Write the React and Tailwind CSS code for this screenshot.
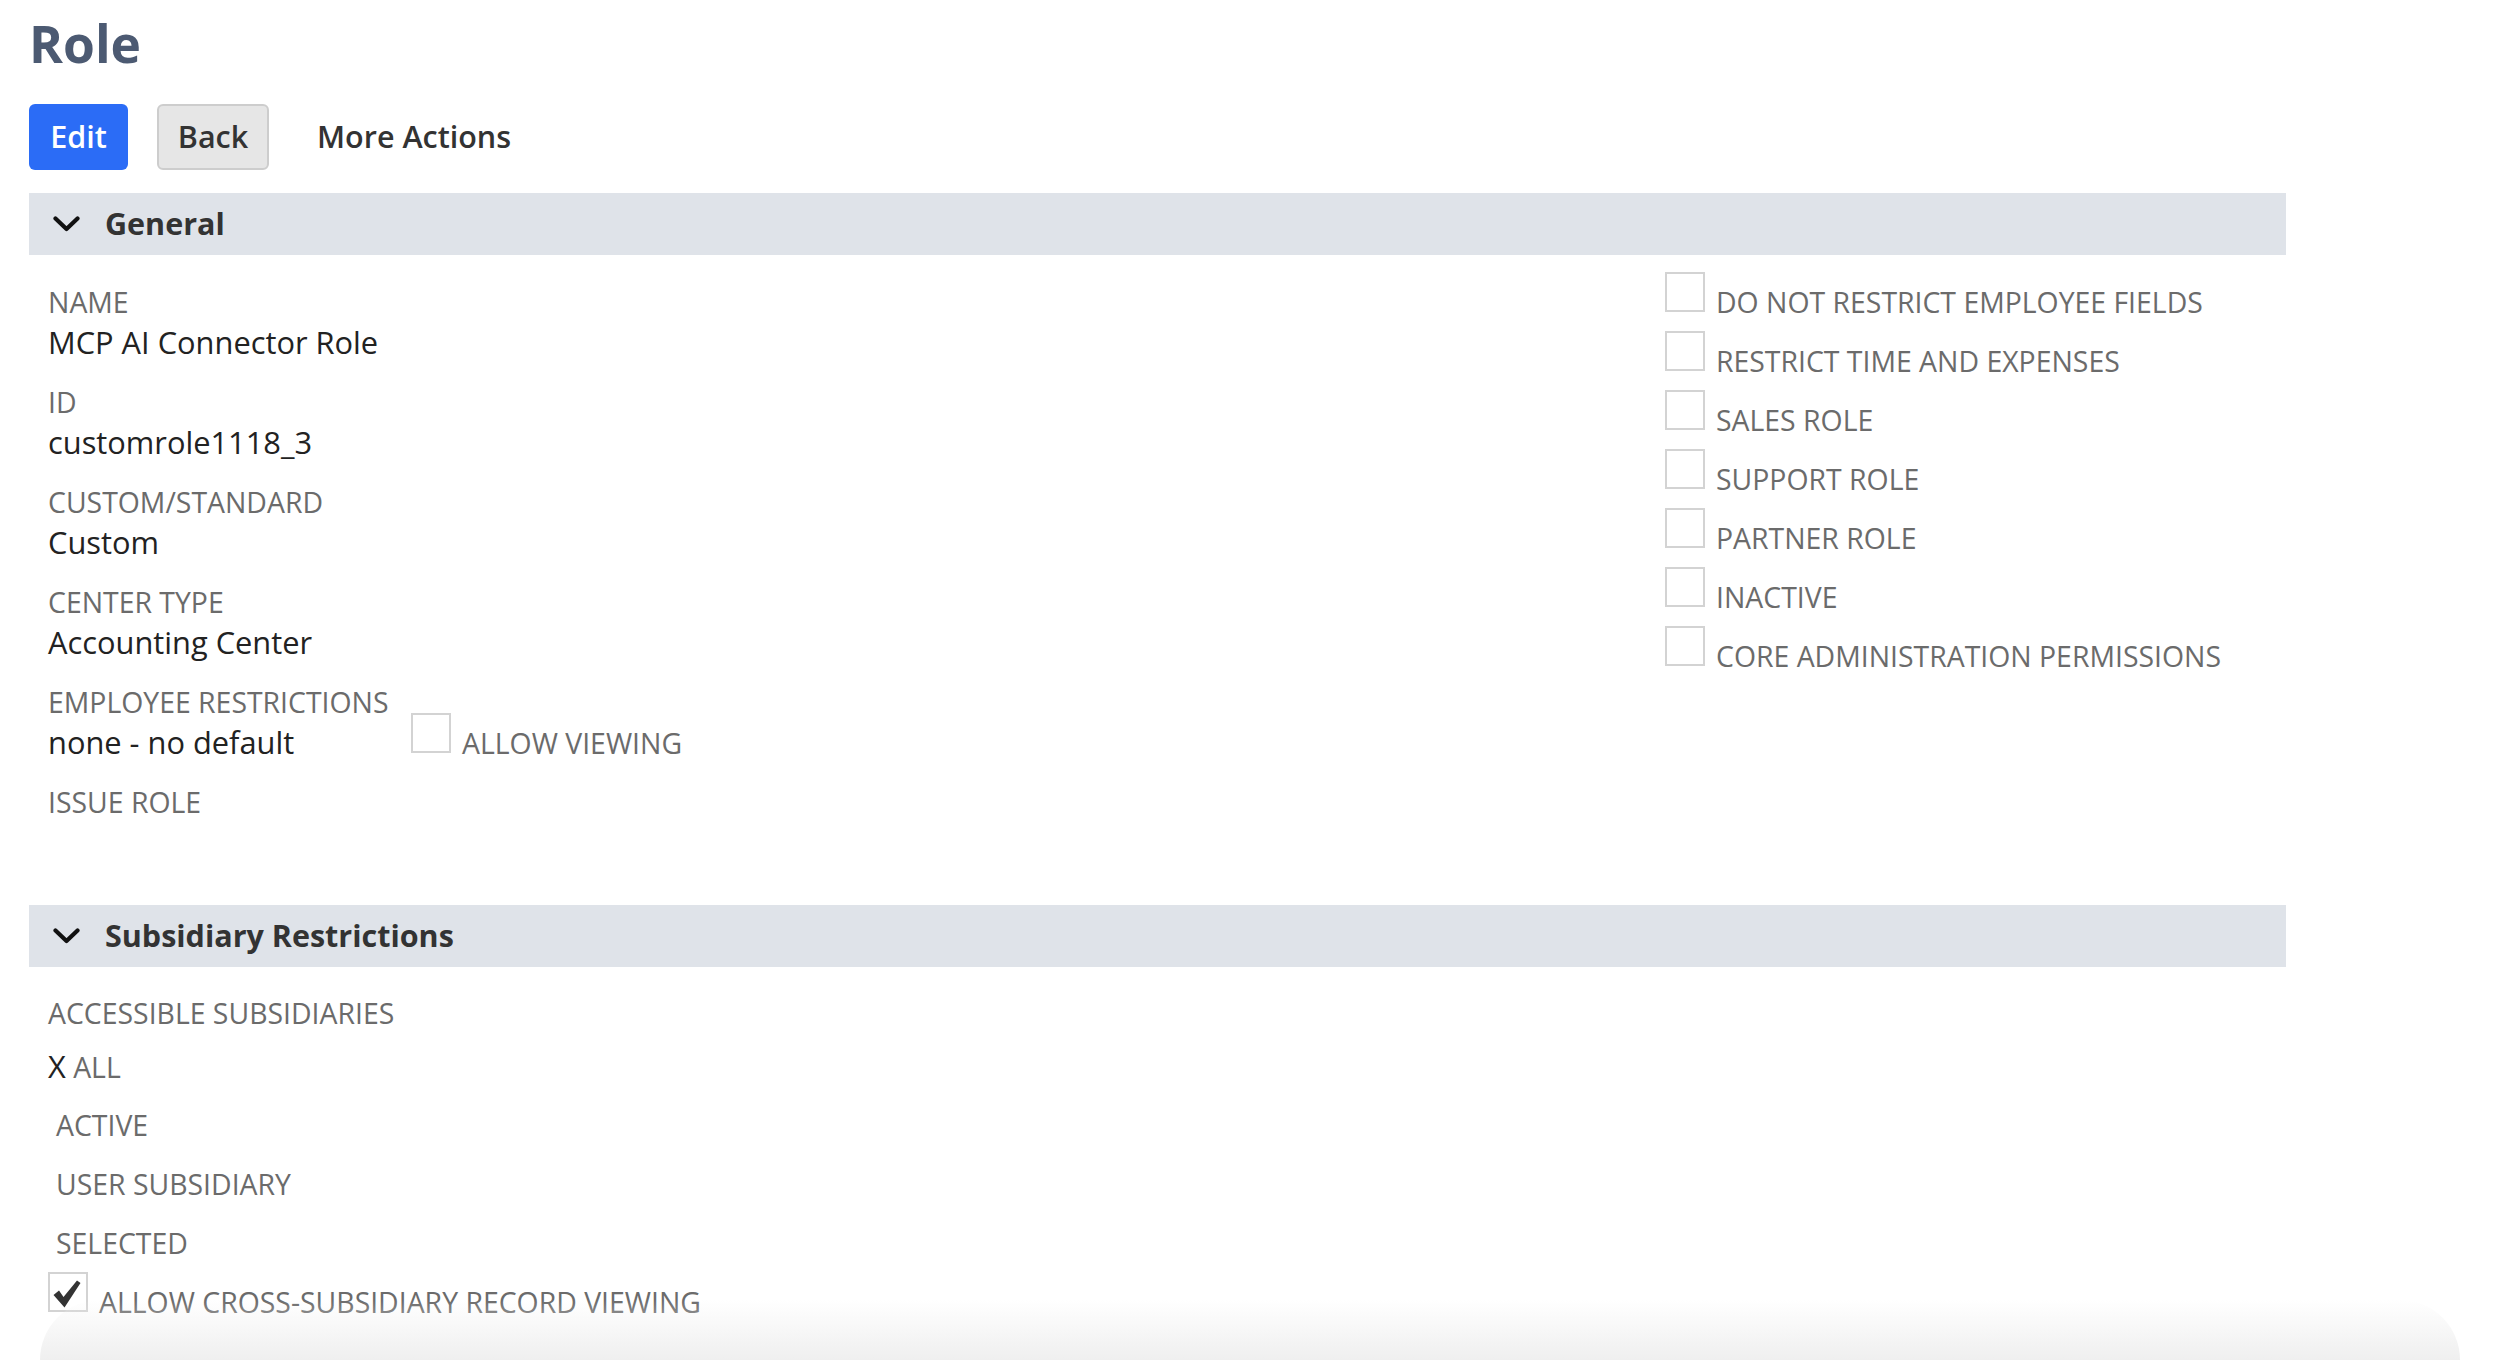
import React from "react";

function Chevron() {
  return (
    <svg width="27" height="16" viewBox="0 0 27 16" fill="none">
      <path d="M2.5 2.5 L13.5 13 L24.5 2.5" stroke="#111" strokeWidth="4.2" strokeLinecap="round" strokeLinejoin="round" />
    </svg>
  );
}

function SectionHeader({ title, className = "" }) {
  return (
    <div className={`flex h-[62px] w-[2257px] items-center bg-[#dfe3e9] pl-[24px] ${className}`}>
      <Chevron />
      <span className="ml-[25px] text-[30.5px] font-bold text-[#333333]">{title}</span>
    </div>
  );
}

function Field({ label, value }) {
  return (
    <div className="mb-[20px]">
      <div className="h-[40px] text-[28.4px] leading-[40px] text-[#6b6b6b]">{label}</div>
      <div className="h-[40px] text-[30.8px] leading-[40px] text-[#222222]">{value}</div>
    </div>
  );
}

function CheckItem({ label, checked = false, className = "" }) {
  return (
    <div className={`flex items-start ${className}`}>
      <div className="relative h-[40px] w-[40px] shrink-0 border-2 border-[#d3d3d3] bg-white">
        {checked && (
          <svg className="absolute left-[2px] top-[6px]" width="30" height="28" viewBox="0 0 30 28">
            <path d="M1.5 15 L7 10.5 L11.5 17 L25 0.5 L28.5 3 L12.5 27.5 Z" fill="#333333" />
          </svg>
        )}
      </div>
      <span className="ml-[11px] mt-[10px] whitespace-nowrap text-[28.4px] leading-[40px] text-[#6b6b6b]">{label}</span>
    </div>
  );
}

export default function App() {
  const flags = [
    "DO NOT RESTRICT EMPLOYEE FIELDS",
    "RESTRICT TIME AND EXPENSES",
    "SALES ROLE",
    "SUPPORT ROLE",
    "PARTNER ROLE",
    "INACTIVE",
    "CORE ADMINISTRATION PERMISSIONS",
  ];

  return (
    <div className="relative min-h-[1360px] overflow-hidden bg-white font-['Open_Sans',sans-serif]">
      <div className="pl-[29px] pt-[18px]">
        <h1 className="h-[50px] text-[51.5px] font-bold leading-[50px] text-[#4c5a72]">Role</h1>

        <div className="mt-[36px] flex h-[66px] items-center">
          <button className="h-[66px] w-[99px] rounded-[6px] bg-[#2b6cf6] text-[30.5px] font-semibold text-white">Edit</button>
          <button className="ml-[29px] h-[66px] w-[112px] rounded-[6px] border-2 border-[#cdcdcd] bg-[#e6e6e6] text-[30.5px] font-semibold text-[#333333]">
            Back
          </button>
          <button className="ml-[48px] text-[30.5px] font-semibold text-[#333333]">More Actions</button>
        </div>

        <SectionHeader title="General" className="mt-[23px]" />

        <div className="flex pl-[19px]">
          <div className="w-[1617px] shrink-0 pt-[27px]">
            <Field label="NAME" value="MCP AI Connector Role" />
            <Field label="ID" value="customrole1118_3" />
            <Field label="CUSTOM/STANDARD" value="Custom" />
            <Field label="CENTER TYPE" value="Accounting Center" />
            <div className="mb-[20px]">
              <div className="h-[40px] text-[28.4px] leading-[40px] text-[#6b6b6b]">EMPLOYEE RESTRICTIONS</div>
              <div className="flex h-[40px] items-start">
                <span className="w-[363px] shrink-0 text-[30.8px] leading-[40px] text-[#222222]">none - no default</span>
                <CheckItem label="ALLOW VIEWING" className="-mt-[9px]" />
              </div>
            </div>
            <div className="h-[40px] text-[28.4px] leading-[40px] text-[#6b6b6b]">ISSUE ROLE</div>
          </div>

          <div className="flex flex-col gap-[9px] pt-[17px]">
            {flags.map((f) => (
              <CheckItem key={f} label={f} />
            ))}
          </div>
        </div>

        <SectionHeader title="Subsidiary Restrictions" className="mt-[83px]" />

        <div className="pl-[19px] pt-[26px]">
          <div className="h-[40px] text-[28.4px] leading-[40px] text-[#6b6b6b]">ACCESSIBLE SUBSIDIARIES</div>
          <div className="mt-[13px] h-[40px] leading-[40px]">
            <span className="text-[30.8px] text-[#222222]">X</span>
            <span className="text-[28.4px] text-[#6b6b6b]"> ALL</span>
          </div>
          <div className="mt-[19px] h-[40px] pl-[8px] text-[28.4px] leading-[40px] text-[#6b6b6b]">ACTIVE</div>
          <div className="mt-[19px] h-[40px] pl-[8px] text-[28.4px] leading-[40px] text-[#6b6b6b]">USER SUBSIDIARY</div>
          <div className="mt-[19px] h-[40px] pl-[8px] text-[28.4px] leading-[40px] text-[#6b6b6b]">SELECTED</div>
          <CheckItem label="ALLOW CROSS-SUBSIDIARY RECORD VIEWING" checked className="mt-[9px]" />
        </div>
      </div>

      <div className="pointer-events-none absolute bottom-0 left-[40px] right-[40px] h-[60px] rounded-t-[80px] bg-linear-to-b from-white/0 to-[#efefef]" />
    </div>
  );
}
